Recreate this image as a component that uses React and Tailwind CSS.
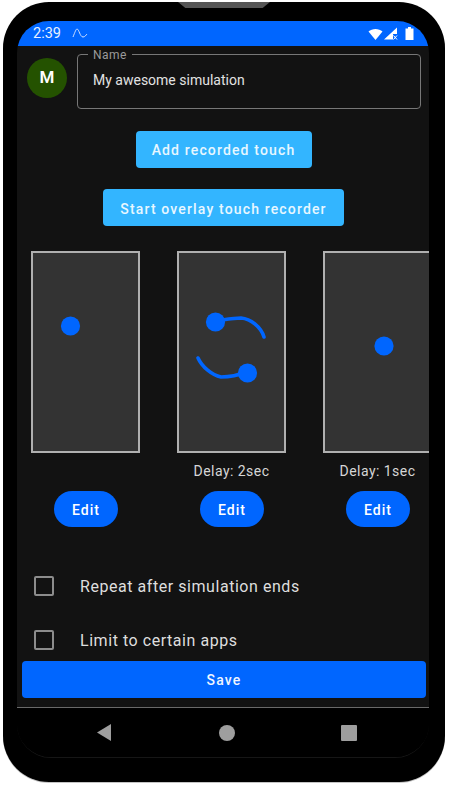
function Thumb({ children }) {
  return (
    <div className="w-[109px] h-[202px] border-2 border-[#b0b0b0] bg-[#333333] shrink-0">
      <svg width="105" height="198" viewBox="0 0 105 198" fill="none">
        {children}
      </svg>
    </div>
  );
}

function TouchCard({ delay, children }) {
  return (
    <div className="flex flex-col items-center w-[109px] shrink-0">
      <Thumb>{children}</Thumb>
      <p className="h-[38px] pt-[8px] text-[14px] leading-[20px] tracking-[0.45px] text-[#d6d6d6] whitespace-nowrap">
        {delay}
      </p>
      <button className="w-[64px] h-[36px] pt-[2px] pl-[1px] rounded-full bg-[#0066ff] text-white text-[14px] font-medium tracking-[1px]">
        Edit
      </button>
    </div>
  );
}

function CheckRow({ label, className }) {
  return (
    <div className={`flex items-center pl-[17px] ${className}`}>
      <div className="w-[20px] h-[20px] border-2 border-[#8c8c8c] rounded-[2px]" />
      <span className="ml-[26px] pt-[2px] text-[16px] leading-[20px] tracking-[0.55px] text-[#dedede]">
        {label}
      </span>
    </div>
  );
}

export default function App() {
  return (
    <div className="relative w-[450px] h-[800px] bg-white font-[family-name:Roboto,sans-serif] overflow-hidden">
      {/* phone body */}
      <div className="relative ml-[3px] mt-[2px] w-[442px] h-[780px] rounded-[46px] bg-black pt-[19px] px-[14px] shadow-[0_1px_0_#c4c4c4]">
        <div className="absolute top-0 left-[175px] w-[92px] h-[6px] bg-[#555555] [clip-path:polygon(0_0,100%_0,92%_100%,8%_100%)]" />

        <div className="w-[412px] h-[737px] rounded-t-[32px] rounded-b-[34px] overflow-hidden flex flex-col bg-black border-b border-[#161616]">
          {/* status bar */}
          <div className="h-[25px] shrink-0 bg-[#0066ff] flex items-center pl-[16px] pr-[15px] text-white">
            <span className="text-[14.5px] leading-[20px] text-[#e8f0ff]">2:39</span>
            <svg className="ml-[11px]" width="16" height="12" viewBox="0 0 16 12" fill="none">
              <path d="M1 9 C3 4 4 1 5 1 C7 1 8 9 11 9 C13 9 14 7 15 6" stroke="#cfe0ff" strokeWidth="1" />
            </svg>
            <div className="ml-auto flex items-center gap-[1px]">
              <svg width="15" height="12" viewBox="0 0 15 12">
                <path d="M0.5 3.5 C4 0 11 0 14.5 3.5 L7.5 12 Z" fill="#ffffff" />
              </svg>
              <svg width="14" height="13" viewBox="0 0 14 13">
                <path d="M0 12.5 L13 0.5 V7 H9 V12.5 Z" fill="#ffffff" />
                <path d="M9.5 8.5 L13 12.5 M13 8.5 L9.5 12.5" stroke="#ffffff" strokeWidth="1" />
              </svg>
              <svg className="ml-[6px]" width="9" height="13" viewBox="0 0 9 13">
                <path d="M3 0 H6 V1.5 H8.5 V13 H0.5 V1.5 H3 Z" fill="#ffffff" />
              </svg>
            </div>
          </div>

          {/* content */}
          <div className="flex-1 bg-[#121212] flex flex-col overflow-hidden">
            <div className="flex pl-[10px] pr-[8px] pt-[8px]">
              <div className="mt-[4px] w-[40px] h-[40px] rounded-full bg-[#245200] flex items-center justify-center text-white text-[17px] font-semibold shrink-0">
                M
              </div>
              <div className="relative ml-[10px] flex-1 h-[55px] border border-[#777777] rounded-[4px] pl-[15px] flex items-center">
                <span className="absolute -top-[7px] left-[10px] px-[5px] bg-[#121212] text-[12px] leading-[14px] tracking-[0.45px] text-[#9a9a9a]">
                  Name
                </span>
                <span className="text-[14px] leading-[20px] text-[#e2e2e2] relative -top-[2px]">My awesome simulation</span>
              </div>
            </div>

            <div className="flex flex-col items-center gap-[21px] mt-[22px] pl-[1px]">
              <button className="w-[176px] h-[37px] pt-[2px] rounded-[4px] bg-[#33b5ff] text-[#e8f7ff] text-[14px] font-medium tracking-[1.15px]">
                Add recorded touch
              </button>
              <button className="w-[241px] h-[37px] pt-[3px] rounded-[4px] bg-[#33b5ff] text-[#e8f7ff] text-[14px] font-medium tracking-[1.15px]">
                Start overlay touch recorder
              </button>
            </div>

            <div className="flex gap-[37px] pl-[14px] mt-[25px] overflow-hidden">
              <TouchCard delay="">
                <circle cx="37.5" cy="73" r="9.6" fill="#0066ff" />
              </TouchCard>
              <TouchCard delay="Delay: 2sec">
                <path d="M36 68 C44 67 55 65 62 65 C72 66 82 74 85 84" stroke="#0066ff" strokeWidth="3.6" strokeLinecap="round" />
                <path d="M67 119 C60 122 50 124 42 124 C33 122 23 114 19 105" stroke="#0066ff" strokeWidth="3.6" strokeLinecap="round" />
                <circle cx="36.5" cy="69" r="9.6" fill="#0066ff" />
                <circle cx="68.5" cy="120" r="9.6" fill="#0066ff" />
              </TouchCard>
              <TouchCard delay="Delay: 1sec">
                <circle cx="59" cy="93" r="9.6" fill="#0066ff" />
              </TouchCard>
            </div>

            <CheckRow label="Repeat after simulation ends" className="mt-[48px]" />
            <CheckRow label="Limit to certain apps" className="mt-[32px]" />

            <div className="pl-[5px] pr-[3px] mt-[10px]">
              <button className="w-full h-[37px] pt-[2px] rounded-[4px] bg-[#0066ff] text-[#f0f5ff] text-[14px] font-medium tracking-[1.15px]">
                Save
              </button>
            </div>
          </div>

          {/* nav bar */}
          <div className="h-[50px] shrink-0 bg-black border-t border-[#6a6a6a] flex items-center relative">
            <svg className="absolute left-[80px] top-[16px]" width="14" height="17" viewBox="0 0 14 17">
              <path d="M0 8.5 L14 0 V17 Z" fill="#9e9e9e" />
            </svg>
            <div className="absolute left-[202px] top-[17px] w-[16px] h-[16px] rounded-full bg-[#9e9e9e]" />
            <div className="absolute left-[324px] top-[17px] w-[16px] h-[16px] rounded-[1px] bg-[#9e9e9e]" />
          </div>
        </div>
      </div>
    </div>
  );
}
